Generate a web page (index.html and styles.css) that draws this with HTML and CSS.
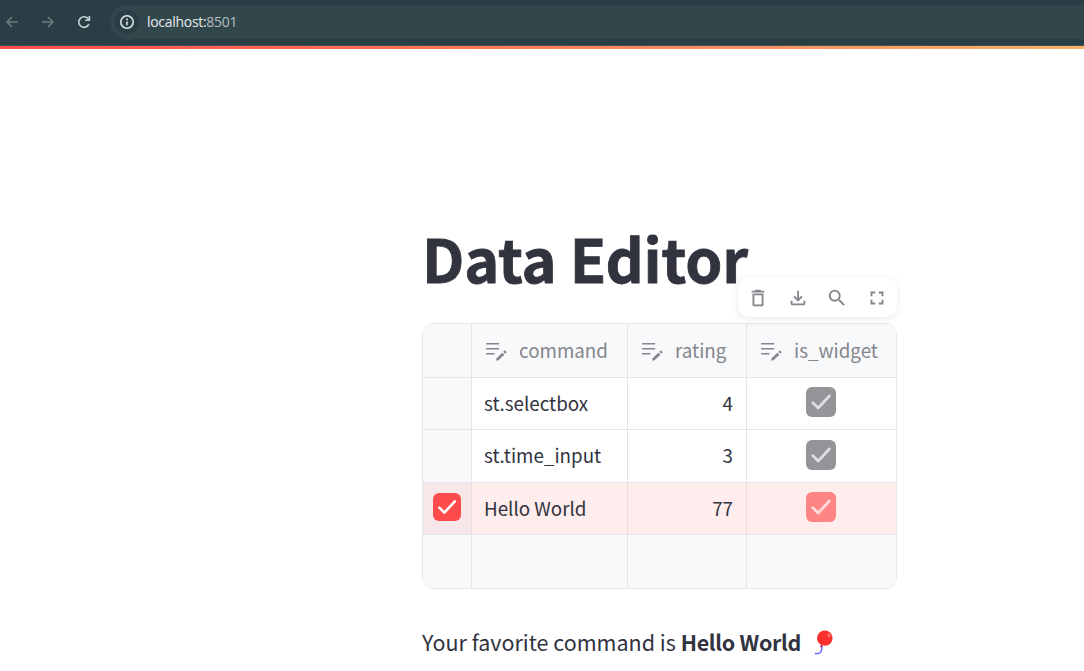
FILE: index.html
```html
<!DOCTYPE html>
<html lang="en">
<head>
<meta charset="utf-8">
<title>Data Editor</title>
<link rel="stylesheet" href="styles.css">
</head>
<body>
<svg class="defs" aria-hidden="true">
  <symbol id="edit-note" viewBox="0 0 24 24"><path d="M3 4.800h12.500v1.400H3zm0 4.800h12.500V11H3zm0 4.800h8v1.400H3z"/><path d="m12.800 19.700 5.800-5.600 1.900 1.900-5.900 5.500h-1.800zM19.400 13.300l1.100-1c.3-.3.7-.3 1 0l.8.8c.3.300.3.700 0 1l-1 1z"/></symbol>
  <symbol id="tick" viewBox="0 0 30 30"><path d="M6.800 15.700 12.200 21 23.400 9" fill="none" stroke="currentColor" stroke-width="2.700" stroke-linecap="round" stroke-linejoin="round"/></symbol>
</svg>
<header class="browser">
  <svg class="nav-icon dim" viewBox="0 0 16 16"><path d="M14 8H3M8 3 3 8l5 5"/></svg>
  <svg class="nav-icon dim" viewBox="0 0 16 16"><path d="M2 8h11M8 3l5 5-5 5"/></svg>
  <svg class="nav-icon" viewBox="0 0 16 16"><path d="M12.900 10.200A5.300 5.300 0 1 1 12.400 5M13.400 2v4.200H9.200"/></svg>
  <div class="address">
    <span class="site-info"><svg viewBox="0 0 16 16"><circle cx="8" cy="8" r="6.200"/><path d="M8 7.400v3.800M8 4.600v1.600"/></svg></span>
    <span class="url">localhost:<span class="port">8501</span></span>
  </div>
</header>
<div class="decoration"></div>
<main class="content">
  <h1 class="title">Data Editor</h1>
  <section class="editor">
    <div class="toolbar">
      <svg viewBox="0 0 24 24"><path d="M16 9v10H8V9h8m-1.500-6h-5l-1 1H5v2h14V4h-3.500l-1-1zM18 7H6v12c0 1.100.9 2 2 2h8c1.100 0 2-.9 2-2V7z"/></svg>
      <svg viewBox="0 0 24 24"><path d="M18 15v3H6v-3H4v3c0 1.100.9 2 2 2h12c1.100 0 2-.9 2-2v-3h-2zm-1-4-1.410-1.410L13 12.170V4h-2v8.170L8.410 9.590 7 11l5 5 5-5z"/></svg>
      <svg viewBox="0 0 24 24"><path d="M15.500 14h-.79l-.28-.27A6.471 6.471 0 0 0 16 9.500 6.500 6.500 0 1 0 9.500 16c1.610 0 3.090-.59 4.230-1.570l.27.28v.79l5 4.990L20.490 19l-4.990-5zm-6 0C7.010 14 5 11.990 5 9.500S7.010 5 9.500 5 14 7.010 14 9.500 11.990 14 9.500 14z"/></svg>
      <svg viewBox="0 0 24 24"><path d="M7 14H5v5h5v-2H7v-3zm-2-4h2V7h3V5H5v5zm12 7h-3v2h5v-5h-2v3zM14 5v2h3v3h2V5h-5z"/></svg>
    </div>
    <div class="grid">
      <div class="cell head"></div>
      <div class="cell head"><svg><use href="#edit-note"/></svg><span>command</span></div>
      <div class="cell head"><svg><use href="#edit-note"/></svg><span>rating</span></div>
      <div class="cell head"><svg><use href="#edit-note"/></svg><span>is_widget</span></div>

      <div class="cell marker"></div>
      <div class="cell">st.selectbox</div>
      <div class="cell num">4</div>
      <div class="cell check"><svg class="box"><use href="#tick"/></svg></div>

      <div class="cell marker"></div>
      <div class="cell">st.time_input</div>
      <div class="cell num">3</div>
      <div class="cell check"><svg class="box"><use href="#tick"/></svg></div>

      <div class="cell marker selected"><svg class="box select-box"><use href="#tick"/></svg></div>
      <div class="cell selected">Hello World</div>
      <div class="cell num selected">77</div>
      <div class="cell check selected"><svg class="box red"><use href="#tick"/></svg></div>

      <div class="cell blank"></div>
      <div class="cell blank"></div>
      <div class="cell blank"></div>
      <div class="cell blank"></div>
    </div>
  </section>
  <p class="result"><span>Your favorite command is <strong>Hello World</strong></span>
    <svg class="balloon" viewBox="0 0 20 26"><path d="M7.500 15.500c1 3 .3 3.600 0 4.700-.5 2.500-2.500 3.700-6 3.300" fill="none" stroke="#5360f4" stroke-width="1.300" stroke-linecap="round"/><path d="m8 14.500-2.400 2 2.800 1z" fill="#b3126b"/><ellipse cx="10.800" cy="8.200" rx="7.800" ry="7.600" fill="#fa302f"/><ellipse cx="15" cy="5.300" rx="1.500" ry="1.900" fill="#ff7774" transform="rotate(-30 15 5.300)"/></svg>
  </p>
</main>
</body>
</html>
```
FILE: styles.css
```css
* { box-sizing: border-box; }
body {
  margin: 0;
  height: 671px;
  overflow: hidden;
  background: #fff;
  color: #31333f;
  font-family: "Noto Sans CJK SC", "Open Sans", sans-serif;
}
.defs { position: absolute; width: 0; height: 0; }

.browser {
  display: flex;
  align-items: center;
  height: 46px;
  padding: 0 0 2px 4px;
  background: #293f45;
  border-bottom: 1px solid #3d5054;
}
.nav-icon {
  flex: none;
  width: 16px;
  height: 16px;
  margin-right: 20px;
  fill: none;
  stroke: #c3d3d5;
  stroke-width: 1.6;
}
.nav-icon.dim { stroke: #6c7d80; }
.address {
  display: flex;
  flex: 1;
  align-items: center;
  height: 34px;
  margin-left: -2px;
  padding-left: 5px;
  border-radius: 17px 0 0 17px;
  background: #32474c;
}
.site-info {
  display: flex;
  align-items: center;
  justify-content: center;
  width: 24px;
  height: 24px;
  border-radius: 50%;
  background: #293f45;
}
.site-info svg {
  width: 16px;
  height: 16px;
  fill: none;
  stroke: #dce4e5;
  stroke-width: 1.6;
}
.url {
  margin-left: 8px;
  color: #e4eaea;
  font: 14px/20px "Open Sans", sans-serif;
  letter-spacing: -0.3px;
}
.port { color: #b5bfc0; }
.decoration { height: 3px; background: linear-gradient(90deg, #ff4b4b, #ffb066); }

.content { width: 475px; margin-left: 422px; padding-top: 166px; }
.title {
  height: 84px;
  margin: 0 0 24px;
  font-size: 59.4px;
  font-weight: 700;
  line-height: 84px;
  letter-spacing: -0.15px;
  white-space: nowrap;
  -webkit-text-stroke: 0.8px #31333f;
}
.editor { position: relative; }
.toolbar {
  position: absolute;
  top: -45px;
  right: 0;
  display: flex;
  align-items: center;
  gap: 15.6px;
  height: 39px;
  padding: 0 8px;
  border-radius: 12px;
  background: #fff;
  box-shadow: 0 2px 10px rgba(49, 51, 63, 0.1);
}
.toolbar svg { width: 24px; height: 24px; padding: 1px; fill: #84858c; }

.grid {
  display: grid;
  grid-template-columns: 49px 156px 119px 1fr;
  grid-template-rows: 54px 52px 53px 52px 53px;
  height: 266px;
  overflow: hidden;
  border: 1px solid #e6e8ea;
  border-radius: 12px;
  font-size: 18.8px;
}
.cell {
  display: flex;
  align-items: center;
  padding: 0 12px 2px;
  border-right: 1px solid #e3e5e8;
  border-bottom: 1px solid #e3e5e8;
  line-height: 28px;
  white-space: nowrap;
}
.cell:nth-child(4n) { border-right: 0; }
.head, .marker, .blank { background: #f8f9fb; }
.head { padding: 0 0 2px 11px; color: #84858c; }
.head svg { flex: none; width: 25px; height: 25px; margin: 1px 11px 0 0; fill: #84858c; }
.num { justify-content: flex-end; padding-right: 13px; }
.check, .marker { justify-content: center; padding: 0; }
.check { padding-right: 2px; }
.selected { background: #ffecec; border-right-color: #ecdadd; }
.marker.selected { background: #f8e7e9; }
.blank { border-bottom: 0; }
.box { width: 30px; height: 30px; margin-bottom: 3px; border-radius: 6px; background: #949599; color: #dedfe0; }
.box.red { background: #ff8585; color: #ffdcdc; }
.select-box { width: 28px; height: 28px; background: #ff4b4b; color: #fff; }

.result {
  display: flex;
  align-items: center;
  height: 36px;
  margin: 35px 0 0;
  font-size: 21.5px;
  line-height: 36px;
  white-space: nowrap;
}
.result strong { font-weight: 600; letter-spacing: -0.3px; }
.balloon { width: 20px; height: 26px; margin: 1px 0 0 13px; }
```
